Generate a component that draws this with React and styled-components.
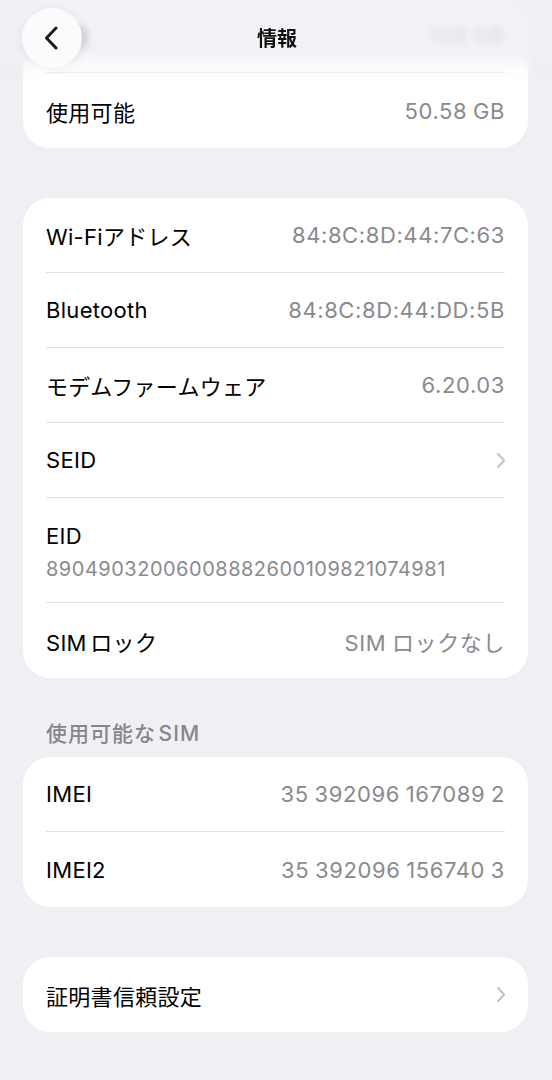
import React from 'react'
import styled, { createGlobalStyle } from 'styled-components'

const GlobalStyle = createGlobalStyle`
  html, body {
    margin: 0;
    padding: 0;
    background: #efeff4;
  }
  body {
    font-family: Inter, "Noto Sans CJK JP", sans-serif;
    -webkit-font-smoothing: antialiased;
  }
`

const Chevron = ({ size = 15, color = '#c4c4c8', width = 2.2 }) => (
  <svg width={size * 0.55} height={size} viewBox="0 0 8 15" fill="none">
    <path
      d="M1 1 L7 7.5 L1 14"
      stroke={color}
      strokeWidth={width}
      strokeLinecap="round"
      strokeLinejoin="round"
    />
  </svg>
)

const App = () => {
  return (
    <Page>
      <GlobalStyle />
      <Header>
        <BackButton>
          <svg width="14" height="24" viewBox="0 0 14 24" fill="none">
            <path
              d="M12 2 L2.5 12 L12 22"
              stroke="#1c1c1e"
              strokeWidth="3"
              strokeLinecap="round"
              strokeLinejoin="round"
            />
          </svg>
        </BackButton>
        <Title>情報</Title>
        <Spacer />
      </Header>

      <Content>
        <Card first>
          <Row>
            <Label>容量</Label>
            <Value>128 GB</Value>
          </Row>
          <Row>
            <Label>使用可能</Label>
            <Value>50.58 GB</Value>
          </Row>
        </Card>

        <Card>
          <Row>
            <Label>Wi-Fiアドレス</Label>
            <Value>84:8C:8D:44:7C:63</Value>
          </Row>
          <Row>
            <Label>Bluetooth</Label>
            <Value>84:8C:8D:44:DD:5B</Value>
          </Row>
          <Row>
            <Label>モデムファームウェア</Label>
            <Value>6.20.03</Value>
          </Row>
          <Row>
            <Label>SEID</Label>
            <Chevron />
          </Row>
          <StackRow>
            <Label>EID</Label>
            <SubValue>89049032006008882600109821074981</SubValue>
          </StackRow>
          <Row>
            <Label>SIM ロック</Label>
            <Value>SIM ロックなし</Value>
          </Row>
        </Card>

        <Section>
          <SectionTitle>使用可能な SIM</SectionTitle>
          <Card>
            <Row>
              <Label>IMEI</Label>
              <Value>35 392096 167089 2</Value>
            </Row>
            <Row>
              <Label>IMEI2</Label>
              <Value>35 392096 156740 3</Value>
            </Row>
          </Card>
        </Section>

        <Card>
          <Row>
            <Label>証明書信頼設定</Label>
            <Chevron />
          </Row>
        </Card>
      </Content>
    </Page>
  )
}

export default App

const Page = styled.div`
  position: relative;
  width: 552px;
  min-height: 1080px;
  overflow: hidden;
  background: #efeff4;
`

const Header = styled.div`
  position: absolute;
  top: 0;
  left: 0;
  right: 0;
  height: 82px;
  z-index: 5;
  display: flex;
  align-items: flex-start;
  padding: 8px 22px 0;
  box-sizing: border-box;
  background: linear-gradient(
    to bottom,
    rgba(239, 239, 244, 0.8) 0%,
    rgba(239, 239, 244, 0.8) 62%,
    rgba(239, 239, 244, 0) 100%
  );
  backdrop-filter: blur(3px);
  -webkit-mask-image: linear-gradient(to bottom, #000 70%, transparent 100%);
`

const BackButton = styled.div`
  width: 60px;
  height: 60px;
  border-radius: 50%;
  background: #fbfbfd;
  box-shadow: 0 2px 10px rgba(0, 0, 0, 0.08);
  display: flex;
  align-items: center;
  justify-content: center;
  padding-right: 3px;
  box-sizing: border-box;
  flex-shrink: 0;
`

const Title = styled.div`
  flex: 1;
  text-align: center;
  font-size: 20px;
  font-weight: 700;
  color: #111;
  line-height: 62px;
  margin-left: 2px;
`

const Spacer = styled.div`
  width: 60px;
  flex-shrink: 0;
`

const Content = styled.div`
  display: flex;
  flex-direction: column;
  gap: 50px;
  padding: 0 24px 0 23px;
`

const Card = styled.div`
  background: #fff;
  border-radius: 27px;
  padding: 0 23px;
  margin-top: ${p => (p.first ? '-2px' : '0')};
`

const Row = styled.div`
  display: flex;
  align-items: center;
  justify-content: space-between;
  height: 75px;
  box-sizing: border-box;
  border-bottom: 1px solid #e2e2e6;

  &:last-child {
    border-bottom: none;
  }
`

const StackRow = styled.div`
  display: flex;
  flex-direction: column;
  justify-content: center;
  gap: 8px;
  height: 105px;
  box-sizing: border-box;
  padding-top: 3px;
  border-bottom: 1px solid #e2e2e6;
`

const Label = styled.span`
  font-size: 22px;
  color: #000;
  letter-spacing: 0.3px;
  word-spacing: -3px;
`

const Value = styled.span`
  font-size: 22px;
  color: #8a8a8e;
  letter-spacing: 0.6px;
  word-spacing: -1px;
`

const SubValue = styled.span`
  font-size: 20px;
  color: #8a8a8e;
  letter-spacing: 0.5px;
`

const Section = styled.div`
  display: flex;
  flex-direction: column;
  margin-top: -9px;
`

const SectionTitle = styled.div`
  font-size: 21px;
  font-weight: 500;
  color: #86868b;
  padding: 0 23px;
  height: 38px;
  line-height: 30px;
  letter-spacing: 1px;
  word-spacing: -4px;
`
